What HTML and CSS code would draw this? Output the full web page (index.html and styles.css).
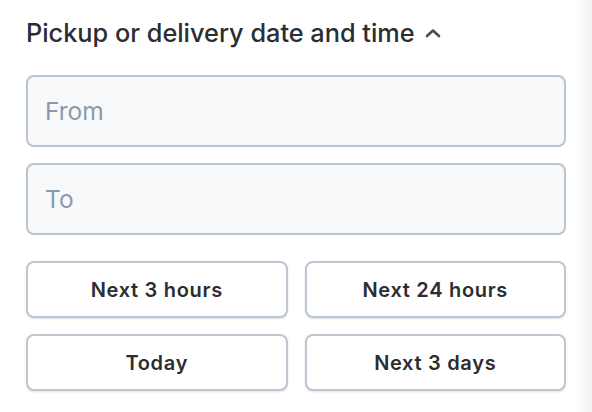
FILE: index.html
```html
<!DOCTYPE html>
<html>
<head>
<meta charset="utf-8">
<link rel="stylesheet" href="styles.css">
</head>
<body>
<div class="panel">
  <div class="title">
    <span>Pickup or delivery date and time</span>
    <svg class="chev" width="16" height="10" viewBox="0 0 16 10"><path d="M2 8 L8 2.5 L14 8" fill="none" stroke="#4a4d52" stroke-width="2.6" stroke-linecap="round" stroke-linejoin="round"/></svg>
  </div>
  <div class="field"><span class="ph">From</span></div>
  <div class="field"><span class="ph">To</span></div>
  <div class="buttons">
    <button class="btn">Next 3 hours</button>
    <button class="btn">Next 24 hours</button>
    <button class="btn">Today</button>
    <button class="btn">Next 3 days</button>
  </div>
</div>
</body>
</html>
```
FILE: styles.css
```css
html, body {
  margin: 0;
  padding: 0;
  height: 100%;
}
body {
  background: linear-gradient(to right, #ffffff 0, #ffffff 574px, #f1f1f1 592px);
  font-family: "Inter", "Liberation Sans", sans-serif;
}
.panel {
  width: 540px;
  padding: 16px 0 0 26px;
}
.title {
  display: flex;
  align-items: center;
  gap: 10px;
  height: 32px;
  font-size: 25.3px;
  font-weight: 500;
  color: #2a2e34;
}
.chev {
  margin-top: 2px;
}
.field {
  box-sizing: border-box;
  height: 72px;
  margin-top: 27px;
  border: 2px solid #b9c5d1;
  border-radius: 8px;
  background: #f7f9fb;
  display: flex;
  align-items: center;
  padding-left: 17px;
}
.field + .field {
  margin-top: 16px;
}
.ph {
  font-size: 24.5px;
  color: #8a9aab;
}
.buttons {
  margin-top: 26px;
  display: grid;
  grid-template-columns: 1fr 1fr;
  column-gap: 17px;
  row-gap: 16px;
}
.btn {
  box-sizing: border-box;
  height: 57px;
  border: 2px solid #bcc7d2;
  border-radius: 8px;
  background: #ffffff;
  box-shadow: 0 1px 2px rgba(120, 140, 160, 0.25);
  font-family: "Inter", "Liberation Sans", sans-serif;
  font-weight: 600;
  font-size: 20px;
  letter-spacing: 0.7px;
  color: #2a2d31;
  padding: 0;
}
```
